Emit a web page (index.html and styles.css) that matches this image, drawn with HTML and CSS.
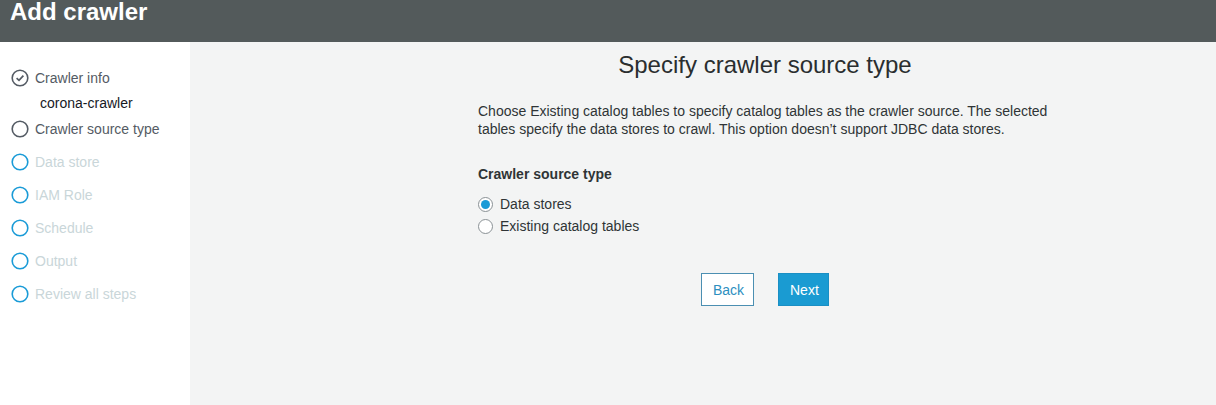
FILE: index.html
```html
<!DOCTYPE html>
<html>
<head>
<meta charset="utf-8">
<link rel="stylesheet" href="styles.css">
</head>
<body>
<header class="topbar"><h1 class="title">Add crawler</h1></header>
<div class="layout">
  <nav class="sidebar">
    <div class="step done">
      <svg class="ico" width="18" height="18" viewBox="0 0 18 18"><circle cx="9" cy="9" r="7.8" fill="none" stroke="#545b64" stroke-width="1.6"/><path d="M5.6 9.2 L8 11.4 L12.4 6.6" fill="none" stroke="#545b64" stroke-width="1.7"/></svg>
      <span>Crawler info</span>
    </div>
    <div class="sub">corona-crawler</div>
    <div class="step current">
      <svg class="ico" width="18" height="18" viewBox="0 0 18 18"><circle cx="9" cy="9" r="7.8" fill="none" stroke="#545b64" stroke-width="1.6"/></svg>
      <span>Crawler source type</span>
    </div>
    <div class="step todo">
      <svg class="ico" width="18" height="18" viewBox="0 0 18 18"><circle cx="9" cy="9" r="7.8" fill="none" stroke="#1a9bd7" stroke-width="1.6"/></svg>
      <span>Data store</span>
    </div>
    <div class="step todo">
      <svg class="ico" width="18" height="18" viewBox="0 0 18 18"><circle cx="9" cy="9" r="7.8" fill="none" stroke="#1a9bd7" stroke-width="1.6"/></svg>
      <span>IAM Role</span>
    </div>
    <div class="step todo">
      <svg class="ico" width="18" height="18" viewBox="0 0 18 18"><circle cx="9" cy="9" r="7.8" fill="none" stroke="#1a9bd7" stroke-width="1.6"/></svg>
      <span>Schedule</span>
    </div>
    <div class="step todo">
      <svg class="ico" width="18" height="18" viewBox="0 0 18 18"><circle cx="9" cy="9" r="7.8" fill="none" stroke="#1a9bd7" stroke-width="1.6"/></svg>
      <span>Output</span>
    </div>
    <div class="step todo">
      <svg class="ico" width="18" height="18" viewBox="0 0 18 18"><circle cx="9" cy="9" r="7.8" fill="none" stroke="#1a9bd7" stroke-width="1.6"/></svg>
      <span>Review all steps</span>
    </div>
  </nav>
  <main class="main">
    <div class="content">
      <h2 class="heading">Specify crawler source type</h2>
      <p class="desc">Choose Existing catalog tables to specify catalog tables as the crawler source. The selected tables specify the data stores to crawl. This option doesn’t support JDBC data stores.</p>
      <div class="label">Crawler source type</div>
      <div class="radios">
        <label class="radio"><span class="dot on"></span>Data stores</label>
        <label class="radio"><span class="dot"></span>Existing catalog tables</label>
      </div>
      <div class="buttons">
        <button class="btn back">Back</button>
        <button class="btn next">Next</button>
      </div>
    </div>
  </main>
</div>
</body>
</html>
```
FILE: styles.css
```css
* { box-sizing: border-box; }
html, body { margin: 0; padding: 0; }
body {
  font-family: "Liberation Sans", Arial, sans-serif;
  background: #f3f4f4;
  width: 1216px;
  height: 405px;
  overflow: hidden;
}
.topbar {
  background: #535a5b;
  height: 42px;
  padding: 0 10px;
}
.title {
  margin: 0;
  color: #fff;
  font-size: 24px;
  font-weight: bold;
  line-height: 24px;
}
.layout {
  display: flex;
  height: 363px;
}
.sidebar {
  width: 190px;
  background: #fff;
  padding-top: 27px;
  padding-left: 11px;
}
.step {
  display: flex;
  align-items: center;
  height: 18px;
  font-size: 14px;
  margin-bottom: 15px;
}
.step .ico { flex: none; margin-right: 6px; }
.step.done, .step.current { color: #545b64; }
.step.done { margin-bottom: 0; }
.step.todo { color: #c9d6d9; }
.sub {
  font-size: 14px;
  color: #16191f;
  padding-left: 29px;
  height: 18px;
  line-height: 18px;
  margin-top: 7px;
  margin-bottom: 8px;
}
.main {
  flex: 1;
  padding-left: 288px;
}
.content {
  width: 574px;
}
.heading {
  margin: 9px 0 0;
  text-align: center;
  font-weight: normal;
  font-size: 24px;
  line-height: 28px;
  color: #2a2e2f;
}
.desc {
  margin: 23px 0 0;
  font-size: 14px;
  line-height: 18px;
  color: #2f3436;
}
.label {
  margin-top: 27px;
  font-size: 14px;
  font-weight: bold;
  color: #2f3436;
  line-height: 18px;
}
.radios {
  margin-top: 12px;
  display: flex;
  flex-direction: column;
  gap: 4px;
}
.radio {
  display: flex;
  align-items: center;
  font-size: 14px;
  color: #2f3436;
  line-height: 18px;
}
.dot {
  width: 15px;
  height: 15px;
  border-radius: 50%;
  border: 1px solid #8a9195;
  background: #fff;
  margin-right: 7px;
  position: relative;
}
.dot.on::after {
  content: "";
  position: absolute;
  left: 2px; top: 2px;
  width: 9px; height: 9px;
  border-radius: 50%;
  background: #1a9bd7;
}
.buttons {
  margin-top: 38px;
  display: flex;
  justify-content: center;
  gap: 24px;
}
.btn {
  font-family: "Liberation Sans", Arial, sans-serif;
  font-size: 14px;
  height: 33px;
  padding: 0 11px;
  cursor: pointer;
}
.back {
  background: #fff;
  color: #2d8fbf;
  border: 1px solid #4b8fb2;
  width: 53px;
}
.next {
  background: #1a9bd2;
  color: #fff;
  border: 1px solid #1a8fc4;
  width: 51px;
}
```
